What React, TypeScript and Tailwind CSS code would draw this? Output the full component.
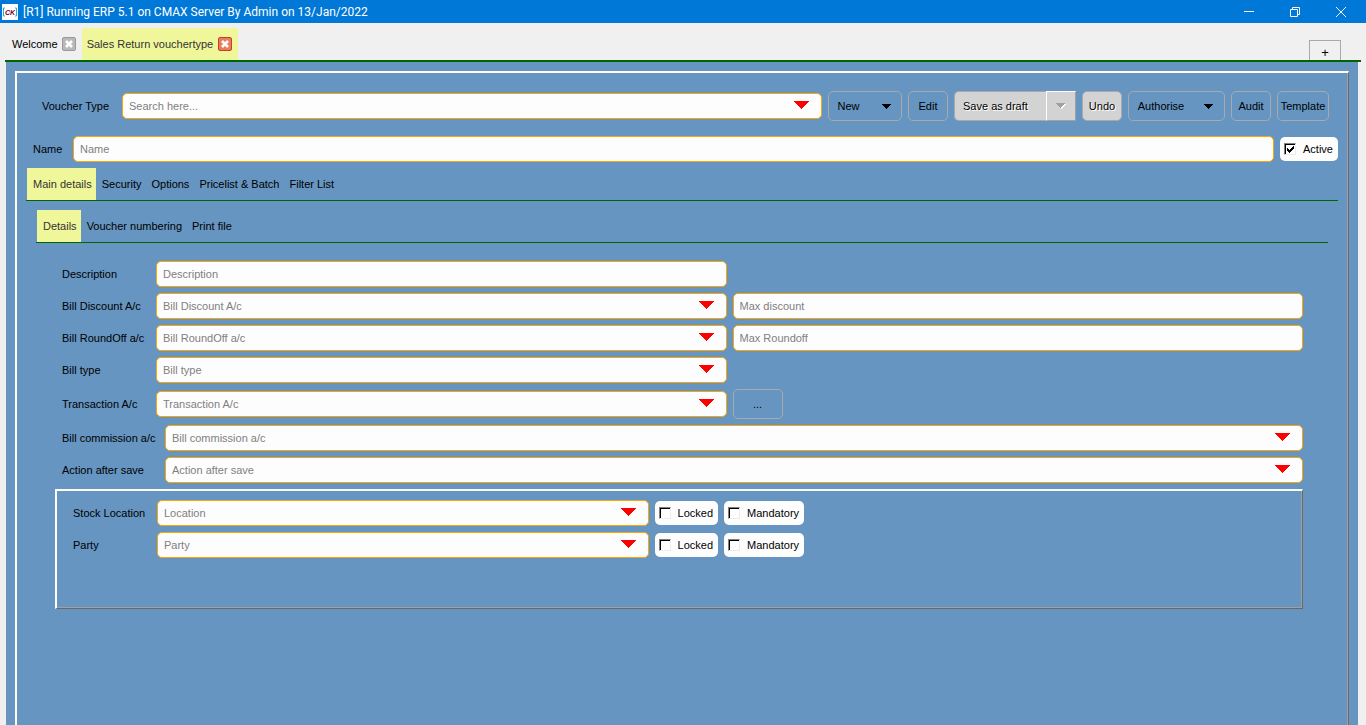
import React, { useState } from 'react';

interface ComboProps {
    id: string;
    placeholder: string;
    className?: string;
}

const fieldClass =
    'block h-[26px] w-full appearance-none rounded-[5px] border border-[#ffa500] bg-[#fdfdfd] px-1.5 text-[11px] leading-4 text-[#808080] placeholder:text-[#808080] focus:outline-none';

const Combo: React.FC<ComboProps> = ({ id, placeholder, className = 'flex-1' }) => (
    <div className={`relative ${className}`}>
        <select id={id} defaultValue="" className={fieldClass}>
            <option value="">{placeholder}</option>
        </select>
        <svg
            className="pointer-events-none absolute top-2 right-3 h-2 w-4"
            viewBox="0 0 16 8"
            fill="#ff0000"
            shapeRendering="crispEdges"
        >
            <path d="M0 0H15.5L7.7 8Z" />
        </svg>
    </div>
);

interface TextFieldProps {
    id?: string;
    label?: string;
    placeholder: string;
}

const TextField: React.FC<TextFieldProps> = ({ id, label, placeholder }) => (
    <div className="flex-1">
        <input id={id} type="text" aria-label={label} placeholder={placeholder} className={fieldClass} />
    </div>
);

interface CheckPillProps {
    label: string;
    defaultChecked?: boolean;
}

const CheckPill: React.FC<CheckPillProps> = ({ label, defaultChecked = false }) => (
    <label className="flex h-6 shrink-0 items-center gap-[7px] rounded-[5px] bg-[#fdfdfd] pr-[5px] pl-1">
        <span className="relative block h-3 w-3">
            <input
                type="checkbox"
                defaultChecked={defaultChecked}
                className="peer block h-3 w-3 appearance-none border border-t-[#808080] border-r-[#ececec] border-b-[#ececec] border-l-[#808080] bg-white shadow-[inset_1px_1px_0_#000]"
            />
            <svg
                className="pointer-events-none absolute inset-0 hidden h-3 w-3 peer-checked:block"
                viewBox="0 0 12 12"
                shapeRendering="crispEdges"
            >
                <path d="M3 5h1v1h1v1h1v-1h1v-1h1v-1h1v-1h1v3h-1v1h-1v1h-1v1h-1v1h-1v-1h-1v-1h-1z" />
            </svg>
        </span>
        {label}
    </label>
);

const CaretDown: React.FC = () => (
    <svg className="h-[5px] w-[9px]" viewBox="0 0 9 5" shapeRendering="crispEdges">
        <path d="M0 0H9L4.5 5Z" />
    </svg>
);

const outlineButton =
    'flex h-[30px] shrink-0 items-center justify-center rounded-[5px] border border-[#a9a9a9]';
const etched = '[text-shadow:1px_1px_0_#fff]';

const CloseIcon: React.FC<{ active?: boolean }> = ({ active = false }) => (
    <svg className="h-3.5 w-3.5" viewBox="0 0 14 14">
        <rect
            x="0.5"
            y="0.5"
            width="13"
            height="13"
            rx="1.5"
            fill={active ? '#e0805c' : '#b9b9b9'}
            stroke={active ? '#d33a26' : '#9a9a9a'}
        />
        <path d="M4 4L10 10M10 4L4 10" stroke="#fff" strokeWidth="2.6" />
    </svg>
);

interface TabsProps {
    tabs: string[];
    className: string;
}

const Tabs: React.FC<TabsProps> = ({ tabs, className }) => {
    const [selected, setSelected] = useState(tabs[0]);

    return (
        <div role="tablist" className={`flex border-b border-[#006400] pl-px ${className}`}>
            {tabs.map((tab) => (
                <button
                    key={tab}
                    type="button"
                    role="tab"
                    aria-selected={tab === selected}
                    onClick={() => setSelected(tab)}
                    className={`h-8 pr-1 pl-1.5 ${tab === selected ? 'bg-[#f0f79b] text-[#333333]' : ''}`}
                >
                    {tab}
                </button>
            ))}
        </div>
    );
};

interface RowProps {
    id: string;
    label: string;
    labelClass?: string;
    children: React.ReactNode;
}

const Row: React.FC<RowProps> = ({ id, label, labelClass = 'w-[94px]', children }) => (
    <div className="flex items-center">
        <label htmlFor={id} className={`shrink-0 ${labelClass}`}>
            {label}
        </label>
        <div className="flex flex-1 items-center gap-1.5">{children}</div>
    </div>
);

const TitleBar: React.FC = () => (
    <header className="flex h-[23px] items-center bg-[#0078d7] pl-0.5 text-white">
        <svg className="h-4 w-4" viewBox="0 0 16 16">
            <rect width="16" height="16" fill="#fff" />
            <path d="M3 4H1.5V12H3M13 4H14.5V12H13" fill="none" stroke="#18b4e0" />
            <text
                x="8"
                y="11"
                textAnchor="middle"
                fontFamily="Liberation Sans, sans-serif"
                fontSize="7"
                fontWeight="bold"
                fontStyle="italic"
                fill="#7a0019"
            >
                CK
            </text>
        </svg>
        <h1 className="flex-1 pl-[5px] font-[Roboto,sans-serif] text-[12px] leading-4">
            [R1] Running ERP 5.1 on CMAX Server By Admin on 13/Jan/2022
        </h1>
        <div className="flex items-center gap-9 pr-5">
            <button type="button" aria-label="Minimize">
                <svg className="h-[10px] w-[10px]" viewBox="0 0 10 10" stroke="#fff">
                    <path d="M0 4.5H10" />
                </svg>
            </button>
            <button type="button" aria-label="Restore">
                <svg className="h-[10px] w-[10px]" viewBox="0 0 10 10" fill="none" stroke="#fff">
                    <path d="M0.5 2.5H7.5V9.5H0.5ZM2.5 2.5V0.5H9.5V7.5H7.5" />
                </svg>
            </button>
            <button type="button" aria-label="Close">
                <svg className="h-[10px] w-[10px]" viewBox="0 0 10 10" stroke="#fff">
                    <path d="M0 0L10 10M10 0L0 10" />
                </svg>
            </button>
        </div>
    </header>
);

const WindowTabs: React.FC = () => (
    <nav className="mx-[5px] flex h-[39px] items-end border-b-2 border-[#006400]">
        <div className="flex h-8 items-center gap-1 pr-1.5 pl-[7px]">
            <button type="button">Welcome</button>
            <button type="button" aria-label="Close Welcome">
                <CloseIcon />
            </button>
        </div>
        <div className="flex h-8 items-center gap-[5px] bg-[#f0f79b] pr-1.5 pl-[5px] text-[#333333]">
            <button type="button">Sales Return vouchertype</button>
            <button type="button" aria-label="Close Sales Return vouchertype">
                <CloseIcon active />
            </button>
        </div>
        <button
            type="button"
            aria-label="New tab"
            className="mr-5 ml-auto h-5 w-8 border border-b-0 border-[#a9a9a9] pt-1 text-[13px] leading-4"
        >
            +
        </button>
    </nav>
);

const Toolbar: React.FC = () => (
    <div className="flex items-center gap-1.5 pr-[19px] pl-[25px]">
        <div className="flex flex-1 items-center">
            <label htmlFor="voucher-type" className="w-20 shrink-0">
                Voucher Type
            </label>
            <Combo id="voucher-type" placeholder="Search here..." />
        </div>
        <button type="button" className={`${outlineButton} w-[74px] gap-[22px] pr-0.5`}>
            New
            <CaretDown />
        </button>
        <button type="button" className={`${outlineButton} w-10`}>
            Edit
        </button>
        <div className="flex h-[30px] w-[122px] shrink-0">
            <button
                type="button"
                className={`flex-1 rounded-l-[5px] border border-r-0 border-[#a9a9a9] bg-[#d3d3d3] pl-2 text-left ${etched}`}
            >
                Save as draft
            </button>
            <button
                type="button"
                aria-label="Save options"
                className="flex w-[30px] items-center justify-center border border-t-white border-r-[#a0a0a0] border-b-[#a0a0a0] border-l-white bg-[#d3d3d3]"
            >
                <svg className="h-1.5 w-2.5" viewBox="0 0 10 6" shapeRendering="crispEdges">
                    <path d="M1 1H10L5.5 6Z" fill="#fff" />
                    <path d="M0 0H9L4.5 5Z" fill="#a0a0a0" />
                </svg>
            </button>
        </div>
        <button type="button" className={`${outlineButton} ${etched} w-10 bg-[#d3d3d3]`}>
            Undo
        </button>
        <button type="button" className={`${outlineButton} w-[97px] gap-5 pr-0.5`}>
            Authorise
            <CaretDown />
        </button>
        <button type="button" className={`${outlineButton} w-10`}>
            Audit
        </button>
        <button type="button" className={`${outlineButton} w-[52px]`}>
            Template
        </button>
    </div>
);

const StockRow: React.FC<{ id: string; label: string; placeholder: string }> = ({ id, label, placeholder }) => (
    <div className="flex items-center">
        <label htmlFor={id} className="w-[84px] shrink-0">
            {label}
        </label>
        <Combo id={id} placeholder={placeholder} className="w-2/5" />
        <div className="ml-1.5 flex gap-1.5">
            <CheckPill label="Locked" />
            <CheckPill label="Mandatory" />
        </div>
    </div>
);

const DetailsForm: React.FC = () => (
    <>
        <div className="mt-[18px] mr-[45px] ml-[45px] flex flex-col gap-1.5">
            <Row id="description" label="Description">
                <TextField id="description" placeholder="Description" />
                <div className="flex-1" />
            </Row>
            <Row id="bill-discount" label="Bill Discount A/c">
                <Combo id="bill-discount" placeholder="Bill Discount A/c" />
                <TextField label="Max discount" placeholder="Max discount" />
            </Row>
            <Row id="bill-roundoff" label="Bill RoundOff a/c">
                <Combo id="bill-roundoff" placeholder="Bill RoundOff a/c" />
                <TextField label="Max Roundoff" placeholder="Max Roundoff" />
            </Row>
            <Row id="bill-type" label="Bill type">
                <Combo id="bill-type" placeholder="Bill type" />
                <div className="flex-1" />
            </Row>
            <Row id="transaction" label="Transaction A/c">
                <Combo id="transaction" placeholder="Transaction A/c" />
                <div className="flex-1">
                    <button type="button" className={`${outlineButton} w-[50px]`}>
                        ...
                    </button>
                </div>
            </Row>
            <Row id="commission" label="Bill commission a/c" labelClass="w-[103px]">
                <Combo id="commission" placeholder="Bill commission a/c" />
            </Row>
            <Row id="after-save" label="Action after save" labelClass="w-[103px]">
                <Combo id="after-save" placeholder="Action after save" />
            </Row>
        </div>
        <section className="mt-1.5 mr-[45px] ml-[38px] flex min-h-[120px] flex-col gap-1.5 border-t-2 border-r border-b border-l-2 border-t-white border-r-[#696969] border-b-[#696969] border-l-white pt-[9px] pl-4 shadow-[inset_-1px_-1px_0_#a0a0a0]">
            <StockRow id="stock-location" label="Stock Location" placeholder="Location" />
            <StockRow id="party" label="Party" placeholder="Party" />
        </section>
    </>
);

export default function App() {
    return (
        <div className="flex min-h-screen flex-col bg-[#f0f0f0] font-['Liberation_Sans',Arial,sans-serif] text-[11px] leading-4 text-black">
            <TitleBar />
            <WindowTabs />
            <main className="mr-2 ml-1.5 flex flex-1 flex-col bg-[#6695c1] px-[9px] pt-[9px]">
                <div className="flex-1 border-t-2 border-r border-l-2 border-t-white border-r-[#696969] border-l-white pt-[18px] shadow-[inset_-1px_0_0_#a0a0a0]">
                    <Toolbar />
                    <div className="mt-[15px] flex items-center gap-1.5 pr-[10px] pl-4">
                        <div className="flex flex-1 items-center">
                            <label htmlFor="name" className="w-10 shrink-0">
                                Name
                            </label>
                            <TextField id="name" placeholder="Name" />
                        </div>
                        <CheckPill label="Active" defaultChecked />
                    </div>
                    <Tabs
                        className="mt-1.5 mr-[10px] ml-[9px]"
                        tabs={['Main details', 'Security', 'Options', 'Pricelist & Batch', 'Filter List']}
                    />
                    <Tabs
                        className="mt-[9px] mr-5 ml-[19px]"
                        tabs={['Details', 'Voucher numbering', 'Print file']}
                    />
                    <DetailsForm />
                </div>
            </main>
        </div>
    );
}
